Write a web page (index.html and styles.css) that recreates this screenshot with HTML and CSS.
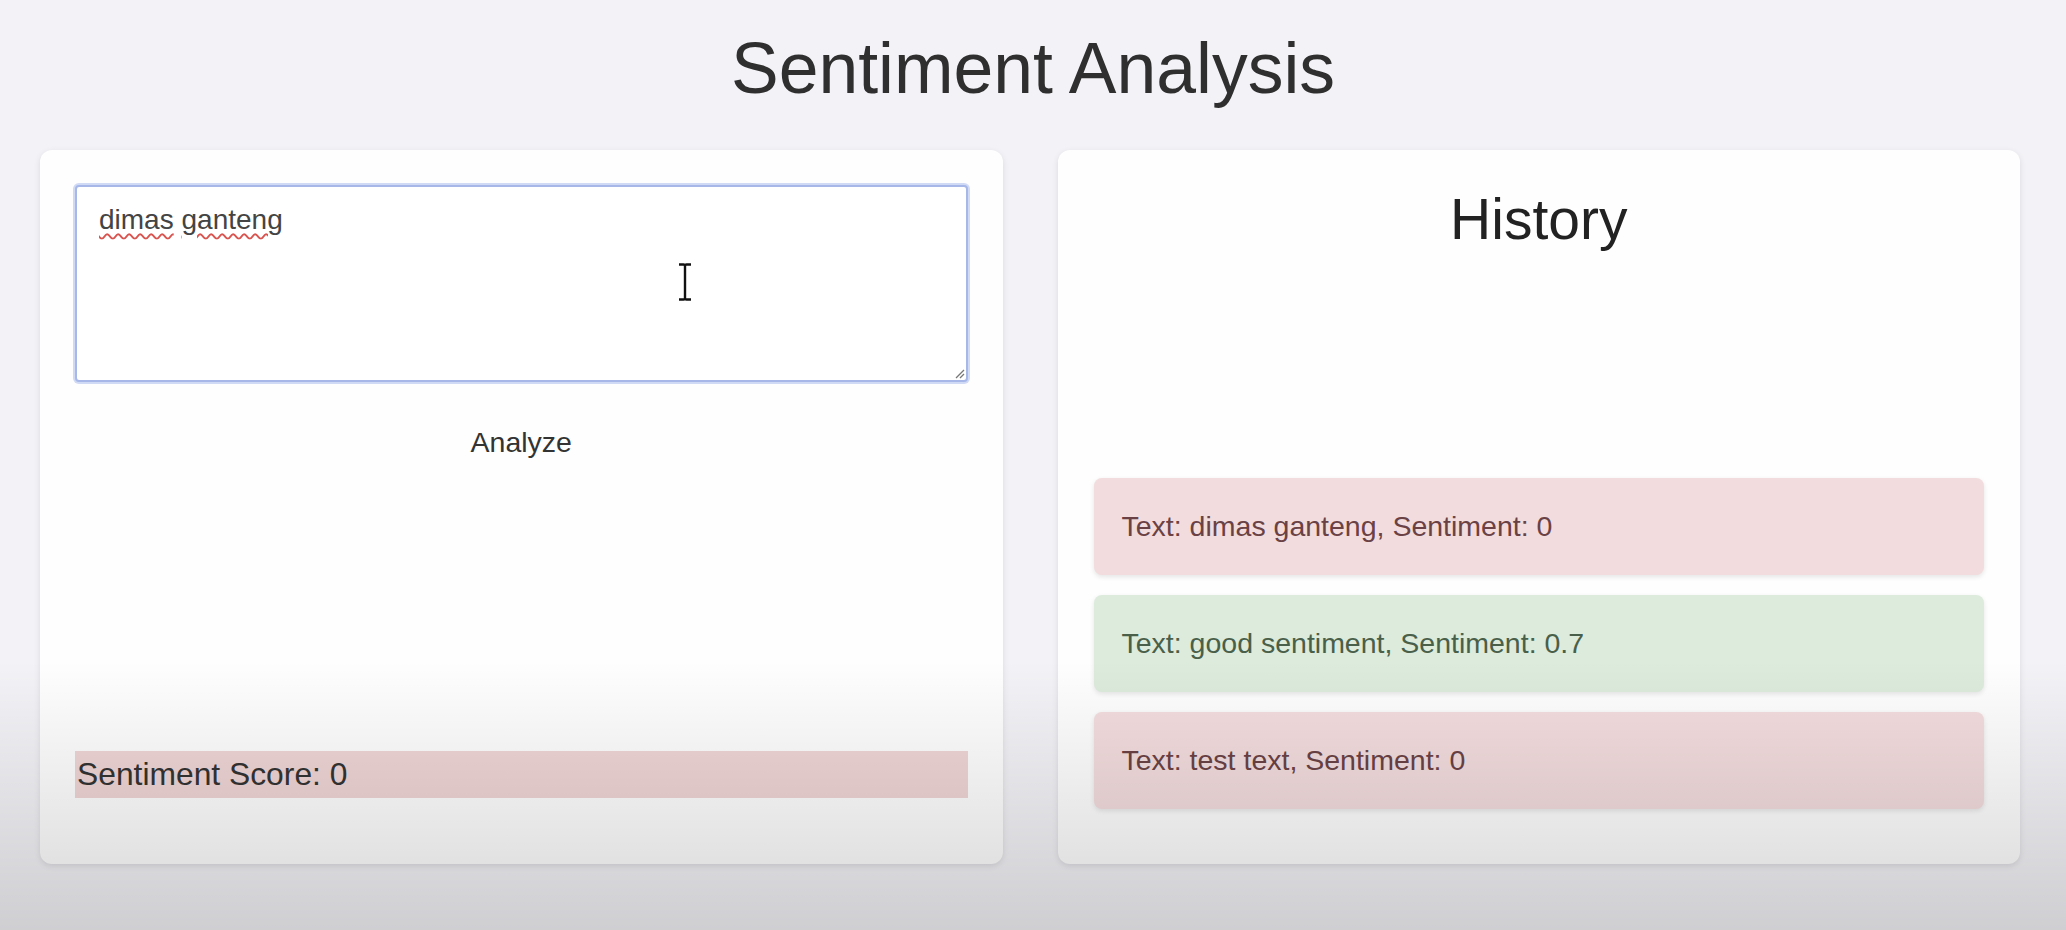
FILE: index.html
```html
<!DOCTYPE html>
<html lang="en">
<head>
<meta charset="utf-8">
<title>Sentiment Analysis</title>
<link rel="stylesheet" href="styles.css">
</head>
<body>
  <h1 class="title">Sentiment Analysis</h1>
  <main class="layout">
    <section class="card card-input">
      <div class="input-box" role="textbox" contenteditable="true" spellcheck="false"><span class="misspelled">dimas</span> <span class="misspelled">ganteng</span><svg class="grip" width="12" height="12" viewBox="0 0 12 12"><path d="M11 3 L3 11 M11 7 L7 11" stroke="#777" stroke-width="1.3" fill="none"/></svg></div>
      <button class="analyze" type="button">Analyze</button>
      <div class="score">Sentiment Score: 0</div>
      <svg class="ibeam" width="14" height="38" viewBox="0 0 14 38"><path d="M1 1.5 H5.5 Q7 1.5 7 3 Q7 1.5 8.5 1.5 H13 M7 3 V35 M1 36.5 H5.5 Q7 36.5 7 35 Q7 36.5 8.5 36.5 H13" stroke="#111" stroke-width="2.4" fill="none"/></svg>
    </section>
    <section class="card card-history">
      <h2 class="history-title">History</h2>
      <ul class="history-list">
        <li class="history-item negative">Text: dimas ganteng, Sentiment: 0</li>
        <li class="history-item positive">Text: good sentiment, Sentiment: 0.7</li>
        <li class="history-item negative">Text: test text, Sentiment: 0</li>
      </ul>
    </section>
  </main>
  <div class="vignette"></div>
</body>
</html>
```
FILE: styles.css
```css
* { box-sizing: border-box; }

html, body {
  margin: 0;
  height: 100%;
}

body {
  background: #f3f3f7;
  font-family: "Liberation Sans", Arial, sans-serif;
  color: #333;
  overflow: hidden;
  position: relative;
}

.title {
  margin: 33px 0 45px;
  font-size: 71.5px;
  line-height: 1;
  font-weight: 400;
  text-align: center;
  color: #2f2f2f;
}

.layout {
  display: flex;
  gap: 55px;
  padding: 0 46px 0 40px;
}

.card {
  flex: 1 1 0;
  height: 714px;
  background: #fefefe;
  border-radius: 12px;
  box-shadow: 0 2px 6px rgba(0, 0, 0, 0.10);
  padding: 35px 35px 66px;
  display: flex;
  flex-direction: column;
  position: relative;
}

.input-box {
  position: relative;
  height: 197px;
  border: 2px solid #a6b7e8;
  border-radius: 4px;
  box-shadow: 0 0 0 2px rgba(170, 188, 236, 0.55);
  background: #fff;
  padding: 17px 22px;
  font-size: 28px;
  line-height: 31px;
  color: #444;
  outline: none;
}

.misspelled {
  text-decoration: underline wavy #d9534f;
  text-decoration-thickness: 1.5px;
  text-underline-offset: 4px;
}

.grip {
  position: absolute;
  right: 1px;
  bottom: 1px;
}

.analyze {
  display: block;
  margin: 44px auto 0;
  padding: 0;
  border: none;
  background: none;
  font-family: inherit;
  font-size: 28.5px;
  line-height: 32px;
  color: #333;
  cursor: pointer;
}

.score {
  margin-top: auto;
  height: 47px;
  line-height: 47px;
  padding-left: 2px;
  background: #efd5d6;
  font-size: 31.8px;
  color: #333;
}

.ibeam {
  position: absolute;
  left: 638px;
  top: 113px;
}

.history-title {
  margin: 6px 0 0;
  font-size: 57px;
  line-height: 1;
  font-weight: 400;
  text-align: center;
  color: #222;
}

.history-list {
  list-style: none;
  margin: 230px 0 0;
  padding: 0 1px;
  display: flex;
  flex-direction: column;
  gap: 20px;
}

.history-item {
  padding: 32px 28px;
  line-height: 33px;
  font-size: 28.5px;
  border-radius: 8px;
  box-shadow: 0 2px 5px rgba(0, 0, 0, 0.10);
}

.negative {
  background: #f3dcdd;
  color: #6a4245;
}

.positive {
  background: #dcebdc;
  color: #4a5f4a;
}

.vignette {
  position: absolute;
  inset: 0;
  pointer-events: none;
  background: linear-gradient(to bottom, rgba(0, 0, 0, 0) 0, rgba(0, 0, 0, 0) 660px, rgba(0, 0, 0, 0.15) 930px);
}
```
